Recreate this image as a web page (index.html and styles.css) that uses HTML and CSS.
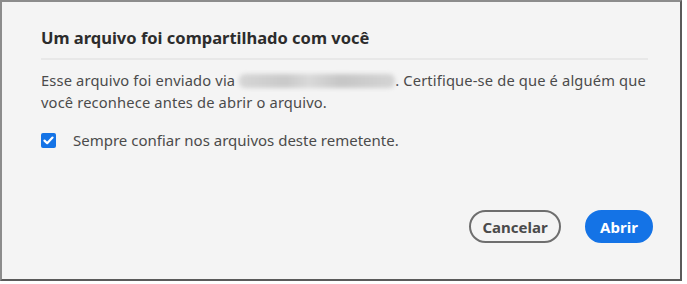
FILE: index.html
```
<!DOCTYPE html>
<html lang="pt">
<head>
<meta charset="utf-8">
<link rel="stylesheet" href="styles.css">
</head>
<body>
<div class="frame">
  <div class="dialog">
    <h1 class="title">Um arquivo foi compartilhado com você</h1>
    <div class="divider"></div>
    <p class="body"><span class="line">Esse arquivo foi enviado via <span class="blur" aria-label="endereço de e-mail oculto"></span>. Certifique-se de que é alguém que</span> <span class="line">você reconhece antes de abrir o arquivo.</span></p>
    <label class="check">
      <span class="box"><svg width="11" height="9" viewBox="0 0 11 9"><path d="M1.5 4.6 L4.2 7.2 L9.5 1.6" fill="none" stroke="#fff" stroke-width="2.2" stroke-linecap="round" stroke-linejoin="round"/></svg></span>
      <span class="check-label">Sempre confiar nos arquivos deste remetente.</span>
    </label>
    <div class="actions">
      <button class="btn secondary">Cancelar</button>
      <button class="btn primary">Abrir</button>
    </div>
  </div>
</div>
</body>
</html>
```
FILE: styles.css
```
html, body {
  margin: 0;
  padding: 0;
  background: #ffffff;
}
.frame {
  box-sizing: border-box;
  width: 682px;
  height: 281px;
  border-top: 2px solid #8c8c8c;
  border-left: 2px solid #8c8c8c;
  border-right: 2px solid #5a5a5a;
  border-bottom: 2px solid #5a5a5a;
  background: #f4f4f4;
}
.dialog {
  box-sizing: border-box;
  height: 100%;
  padding: 25px 30px 0 39px;
  display: flex;
  flex-direction: column;
  font-family: "Noto Sans", "Open Sans", sans-serif;
}
.title {
  margin: 0;
  font-size: 16.5px;
  font-weight: 700;
  color: #2c2c2c;
  line-height: 22px;
}
.divider {
  height: 2px;
  background: #e8e8e8;
  margin-top: 9px;
  margin-right: 2px;
}
.body {
  margin: 9px 0 0;
  font-size: 14.7px;
  letter-spacing: 0.15px;
  line-height: 22px;
  color: #4b4b4b;
}
.line {
  display: block;
  white-space: nowrap;
}
.blur {
  display: inline-block;
  width: 156px;
  height: 14px;
  vertical-align: -2px;
  border-radius: 6px;
  background: linear-gradient(90deg, #d6d6d6 0%, #c9c9c9 30%, #d9d9d9 45%, #c6c6c6 65%, #d4d4d4 100%);
  filter: blur(2px);
}
.check {
  display: flex;
  align-items: center;
  gap: 17px;
  margin-top: 17px;
}
.box {
  width: 15px;
  height: 15px;
  border-radius: 2px;
  background: #1473e6;
  display: flex;
  align-items: center;
  justify-content: center;
}
.check-label {
  font-size: 15px;
  color: #4b4b4b;
  line-height: 20px;
}
.actions {
  display: flex;
  justify-content: flex-end;
  gap: 24px;
  margin-top: 60px;
  margin-right: -3px;
}
.btn {
  font-family: "Noto Sans", "Open Sans", sans-serif;
  font-weight: 700;
  font-size: 15px;
  height: 33px;
  border-radius: 17px;
  padding: 0 10px;
  box-sizing: border-box;
}
.secondary {
  background: transparent;
  border: 2px solid #6e6e6e;
  color: #4b4b4b;
  width: 92px;
}
.primary {
  background: #1473e6;
  border: 2px solid #1473e6;
  color: #ffffff;
  width: 68px;
}
```
